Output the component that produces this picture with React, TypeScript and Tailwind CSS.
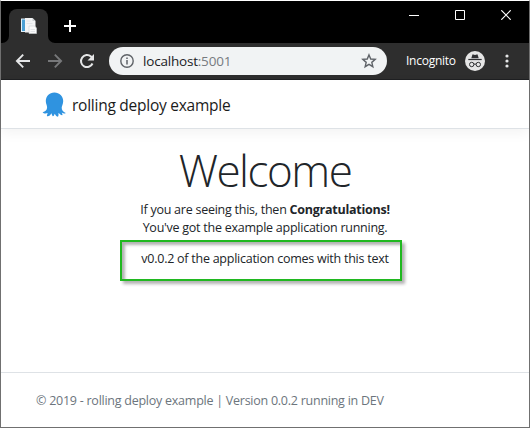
import React from "react";

function TabFavicon() {
  return (
    <svg className="block" width="18" height="18" viewBox="0 0 18 18">
      <path d="M1 1.500h10V15H1z" fill="#e3f1f9" />
      <path d="M2 2.500h3v11.500H2z" fill="#4a9fd4" />
      <path d="M5 1h7.500L15.500 4V15.500H5z" fill="#f3f4f5" />
      <path d="M12.500 1v3h3z" fill="#c9cdd0" />
      <path d="M9 9h5.500l2 2v5.500H9z" fill="#fafafa" stroke="#cdd1d4" strokeWidth=".6" />
      <path d="M6.500 4h4M6.500 6.500h6M10.500 12.500h4.500M10.500 14.500h4.500" stroke="#dde0e3" strokeWidth=".8" />
    </svg>
  );
}

function TabStrip() {
  return (
    <div className="flex h-[42px] items-end bg-black">
      <div className="relative flex h-[34px] w-[39px] shrink-0 ml-[8px] items-center justify-center rounded-t-[8px] bg-[#2e2e2e]">
        <TabFavicon />
        <svg className="absolute bottom-0 -left-[7px]" width="7" height="7" viewBox="0 0 7 7">
          <path d="M7 0v7H0a7 7 0 0 0 7-7z" fill="#2e2e2e" />
        </svg>
        <svg className="absolute bottom-0 -right-[7px]" width="7" height="7" viewBox="0 0 7 7">
          <path d="M0 0v7h7a7 7 0 0 1-7-7z" fill="#2e2e2e" />
        </svg>
      </div>
      <svg className="mb-[10px] ml-[15px]" width="14" height="14" viewBox="0 0 14 14" fill="none" stroke="#fff" strokeWidth="2">
        <path d="M1 7h12M7 1v12" />
      </svg>
      <div className="mr-[18px] mb-[23px] ml-auto flex items-center gap-[36px]">
        <svg width="10" height="10" viewBox="0 0 10 10">
          <path d="M0 5.500h10" stroke="#fff" />
        </svg>
        <svg width="10" height="10" viewBox="0 0 10 10">
          <path d="M.5.5h9v9h-9z" stroke="#fff" fill="none" />
        </svg>
        <svg width="10" height="10" viewBox="0 0 10 10">
          <path d="M.3.3l9.400 9.400M9.700.3L.3 9.700" stroke="#fff" strokeWidth="1.200" />
        </svg>
      </div>
    </div>
  );
}

function Toolbar() {
  return (
    <div className="flex h-[37px] items-center border-b border-[#1f2022] bg-[#2e2e2e]">
      <svg className="ml-[14px] shrink-0" width="16" height="16" viewBox="0 0 16 16" fill="none" stroke="#e5e6e7" strokeWidth="1.900">
        <path d="M15 8H2.500M8.200 1.700L1.900 8l6.300 6.300" />
      </svg>
      <svg className="ml-[16px] shrink-0" width="16" height="16" viewBox="0 0 16 16" fill="none" stroke="#77787a" strokeWidth="1.900">
        <path d="M1 8h12.500M7.800 1.700L14.100 8l-6.300 6.300" />
      </svg>
      <svg className="ml-[15px] shrink-0" width="18" height="18" viewBox="0 0 18 18">
        <path d="M14.500 11.500A6 6 0 1 1 13 4.600l1.500 1.500" fill="none" stroke="#e5e6e7" strokeWidth="2" />
        <path d="M16 2v6.500H9.500z" fill="#e5e6e7" />
      </svg>
      <div className="ml-[13px] flex h-[28px] w-[278px] shrink-0 items-center rounded-full bg-[#f1f3f4]">
        <svg className="ml-[11px] shrink-0" width="14" height="14" viewBox="0 0 14 14">
          <circle cx="7" cy="7" r="6.200" fill="none" stroke="#5f6368" strokeWidth="1.400" />
          <path d="M6.250 6h1.500v4.500h-1.500zM6.250 3.500h1.500V5h-1.500z" fill="#5f6368" />
        </svg>
        <span className="ml-[9px] whitespace-nowrap text-[13.5px] leading-[18px] tracking-[-0.2px] text-[#202124]">
          localhost<span className="text-[#777b80]">:5001</span>
        </span>
        <svg className="mr-[10px] ml-auto shrink-0" width="16" height="16" viewBox="0 0 16 16">
          <path d="M8 1.900l1.750 4.100 4.450.4-3.400 2.950 1.050 4.350L8 11.400l-3.850 2.300 1.050-4.350L1.800 6.400 6.250 6z" fill="none" stroke="#5f6368" strokeWidth="1.400" />
        </svg>
      </div>
      <span className="ml-[19px] w-[50px] whitespace-nowrap text-[12px] leading-[18px] tracking-[-0.25px] text-white">Incognito</span>
      <svg className="ml-[9px] shrink-0" width="20" height="20" viewBox="0 0 20 20">
        <circle cx="10" cy="10" r="10" fill="#e5e5e5" />
        <path d="M6.300 7.300l1-3.400q.2-.7.900-.5l1.800.5 1.800-.5q.7-.2.9.5l1 3.400z" fill="#303134" />
        <path d="M3.300 8.500h13.400" stroke="#303134" strokeWidth="1.200" />
        <circle cx="6.700" cy="13.500" r="2.200" fill="none" stroke="#303134" />
        <circle cx="13.300" cy="13.500" r="2.200" fill="none" stroke="#303134" />
        <path d="M8.900 13.300q1.100-.7 2.200 0" fill="none" stroke="#303134" />
      </svg>
      <svg className="ml-[20px] shrink-0" width="4" height="14" viewBox="0 0 4 14" fill="#e5e6e7">
        <circle cx="2" cy="2" r="1.600" />
        <circle cx="2" cy="7" r="1.600" />
        <circle cx="2" cy="12" r="1.600" />
      </svg>
    </div>
  );
}

function Octopus() {
  return (
    <svg className="shrink-0" width="24" height="25" viewBox="0 0 24 25" fill="#2f93e0">
      <path d="M12.400.4C7.300.4 3.800 4.300 3.800 9c0 2.800 1.400 4.400 1.300 6.500-.1 2.600-1.600 3.900-4.500 4.700.8 1.300 3.200 1.600 5 .9-.1 1.200-1 2.300-.6 3.200 1.900.4 3.400-1.100 4.300-3 .6.900.6 2.300 1.500 3 1.100-.1 1.400-1.300 1.800-2.600.8.900 1.500 2.700 3 3 1.200-.3 1-2 .8-3.600 1.200.6 2.200 2.200 3.800 2.200.8-.8-.1-1.900-.5-2.900 1.500.9 3 1.500 4 .5-2.600-1-4.200-2.900-4-5.300.2-2 1.500-3.600 1.500-6.600C21.200 4.100 17.500.4 12.400.4z" />
    </svg>
  );
}

export default function App() {
  return (
    <div className="flex h-[428px] w-[530px] flex-col border border-[#707070] border-t-white bg-white font-['Open_Sans','Noto_Sans',sans-serif] text-[#212529]">
      <TabStrip />
      <Toolbar />
      <header className="flex h-[49px] shrink-0 items-center border-b border-[#dee2e6] pl-[41px] shadow-[0_4px_12px_rgba(0,0,0,0.05)]">
        <Octopus />
        <span className="ml-[6px] pt-[1px] whitespace-nowrap text-[15.5px] leading-[22px] tracking-[-0.25px] text-[#1b1b1b]">rolling deploy example</span>
      </header>
      <main className="flex grow flex-col items-center">
        <h1 className="mt-[14px] whitespace-nowrap text-[44px] leading-[54px] font-light tracking-[-1.5px]">Welcome</h1>
        <p className="mt-[4px] whitespace-nowrap text-[12.5px] leading-[18px] tracking-[-0.25px]">
          If you are seeing this, then <b className="font-bold">Congratulations!</b>
        </p>
        <p className="whitespace-nowrap text-[12.5px] leading-[18px] tracking-[-0.25px]">You've got the example application running.</p>
        <div className="mt-[3px] -ml-[8px] flex h-[41px] w-[282px] justify-center border-2 border-[#20b820] pt-[8px] pl-[8px] shadow-[3px_3px_3px_rgba(0,0,0,0.3),inset_3px_3px_3px_rgba(0,0,0,0.3)]">
          <p className="whitespace-nowrap text-[12.5px] leading-[18px] tracking-[-0.25px]">v0.0.2 of the application comes with this text</p>
        </div>
      </main>
      <footer className="flex h-[55px] shrink-0 items-center border-t border-[#dee2e6] pt-[2px] pl-[35px]">
        <span className="whitespace-nowrap text-[12.5px] leading-[18px] tracking-[-0.25px] text-[#6c757d]">© 2019 - rolling deploy example | Version 0.0.2 running in DEV</span>
      </footer>
    </div>
  );
}
